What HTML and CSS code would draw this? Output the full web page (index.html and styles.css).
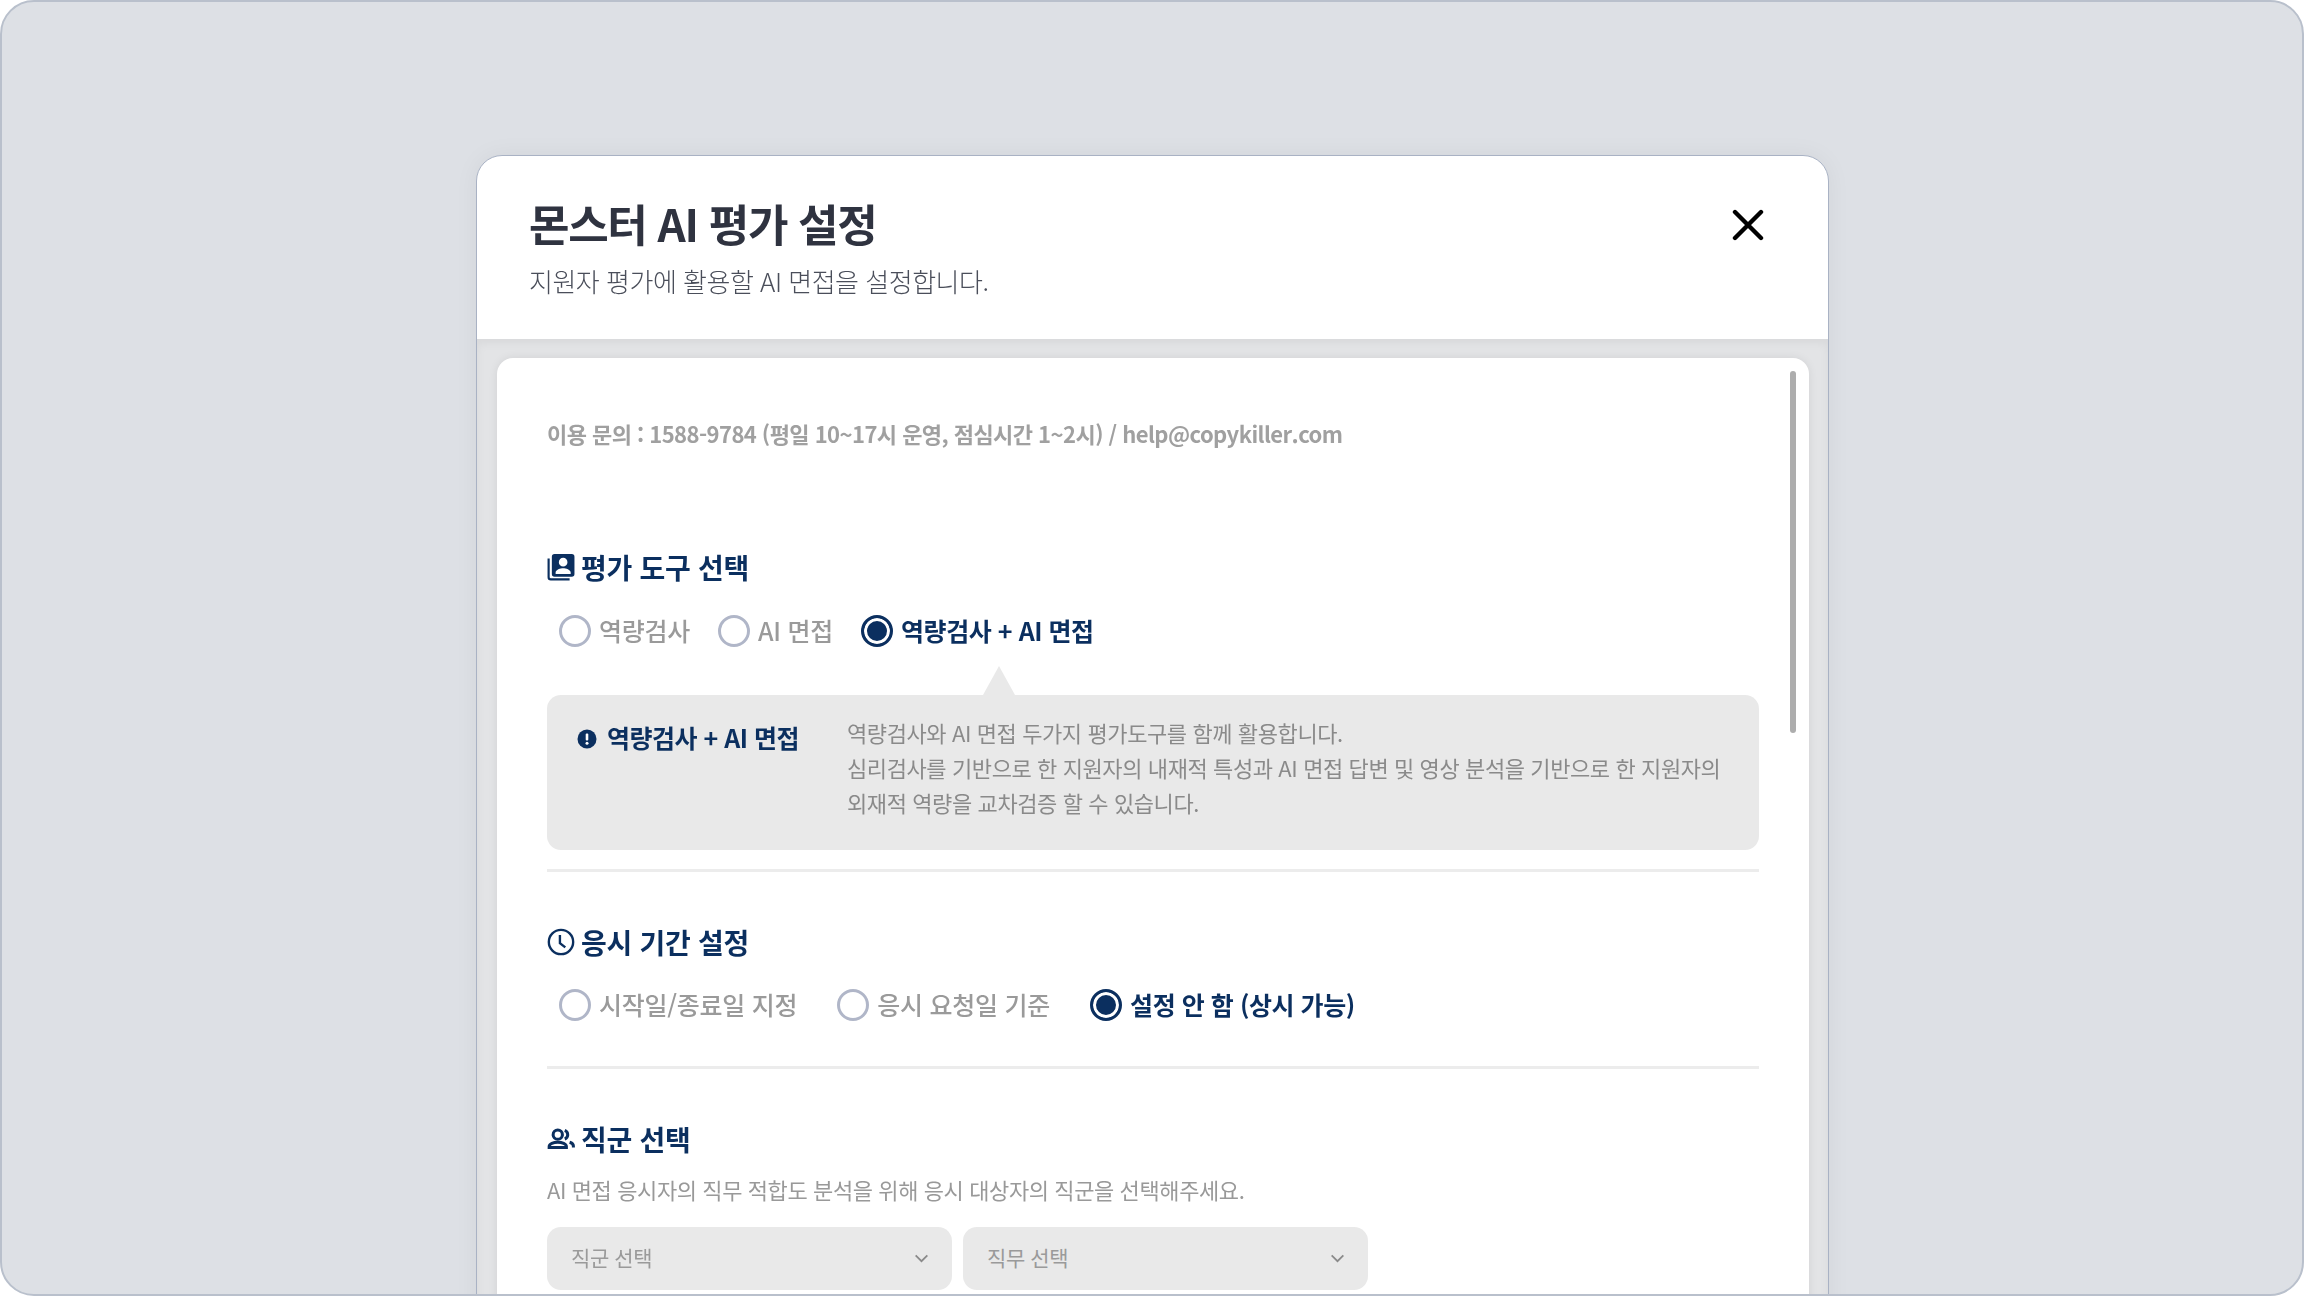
FILE: index.html
```html
<!DOCTYPE html>
<html lang="ko">
<head>
  <meta charset="UTF-8">
  <title>몬스터 AI 평가 설정</title>
  <link rel="stylesheet" href="styles.css">
</head>
<body>
  <div class="frame">
    <div class="modal">
      <div class="modal-head">
        <div>
          <h1>몬스터 AI 평가 설정</h1>
          <p class="modal-sub">지원자 평가에 활용할 AI 면접을 설정합니다.</p>
        </div>
        <button class="close-btn" aria-label="닫기">
          <svg width="32" height="32" viewBox="0 0 32 32"><path d="M3 3L29 29M29 3L3 29" fill="none" stroke="#000" stroke-width="4.400" stroke-linecap="round"/></svg>
        </button>
      </div>

      <div class="modal-body">
        <div class="card">
          <div class="scroll-thumb"></div>
          <p class="contact">이용 문의 : 1588-9784 (평일 10~17시 운영, 점심시간 1~2시) / help@copykiller.com</p>

          <section class="block first">
            <h2>
              <svg class="head-icon" width="28" height="28" viewBox="0 0 26 26">
                <path d="M1.500 5v17.500a2 2 0 0 0 2 2H21" fill="none" stroke="#0b2f5f" stroke-width="2"/>
                <path fill="#0b2f5f" fill-rule="evenodd" d="M7 1h16a2.500 2.500 0 0 1 2.500 2.500v16a2.500 2.500 0 0 1-2.500 2.500H7a2.500 2.500 0 0 1-2.500-2.500v-16A2.500 2.500 0 0 1 7 1zm8 3.500a4 4 0 1 0 0 8 4 4 0 0 0 0-8zM8 19.500h14v-1.300c0-2.600-4.500-4-7-4s-7 1.400-7 4z"/>
              </svg>
              평가 도구 선택
            </h2>
            <div class="radio-row">
              <label class="radio"><span class="dot"></span>역량검사</label>
              <label class="radio"><span class="dot"></span>AI 면접</label>
              <label class="radio on"><span class="dot"></span>역량검사 + AI 면접</label>
            </div>
            <div class="info-box">
              <div class="info-title">
                <svg class="info-icon" width="20" height="20" viewBox="0 0 20 20"><circle cx="10" cy="10" r="9.500" fill="#0b2f5f"/><rect x="8.700" y="4.500" width="2.600" height="7" rx="1" fill="#fff"/><circle cx="10" cy="14.300" r="1.500" fill="#fff"/></svg>
                역량검사 + AI 면접
              </div>
              <p class="info-text">역량검사와 AI 면접 두가지 평가도구를 함께 활용합니다.<br>심리검사를 기반으로 한 지원자의 내재적 특성과 AI 면접 답변 및 영상 분석을 기반으로 한 지원자의<br>외재적 역량을 교차검증 할 수 있습니다.</p>
            </div>
          </section>

          <section class="block period">
            <h2>
              <svg class="head-icon" width="28" height="28" viewBox="0 0 26 26">
                <circle cx="13" cy="13" r="11.300" fill="none" stroke="#0b2f5f" stroke-width="2.200"/>
                <path d="M12 6.500V14l5 4" fill="none" stroke="#0b2f5f" stroke-width="2.200"/>
              </svg>
              응시 기간 설정
            </h2>
            <div class="radio-row wide">
              <label class="radio"><span class="dot"></span>시작일/종료일 지정</label>
              <label class="radio"><span class="dot"></span>응시 요청일 기준</label>
              <label class="radio on"><span class="dot"></span>설정 안 함 (상시 가능)</label>
            </div>
          </section>

          <section class="block last">
            <h2>
              <svg class="head-icon" width="28" height="28" viewBox="0 0 26 26">
                <circle cx="10" cy="9" r="4.300" fill="none" stroke="#0b2f5f" stroke-width="2.800"/>
                <path d="M2 21v-1c0-2.500 4-4 8-4s8 1.500 8 4v1z" fill="none" stroke="#0b2f5f" stroke-width="2.800"/>
                <path d="M16.500 5a4.300 4.300 0 0 1 0 8M21 16c2 .6 3.500 2 3.500 3.500V21" fill="none" stroke="#0b2f5f" stroke-width="2.800"/>
              </svg>
              직군 선택
            </h2>
            <p class="desc">AI 면접 응시자의 직무 적합도 분석을 위해 응시 대상자의 직군을 선택해주세요.</p>
            <div class="select-row">
              <div class="select"><span class="select-label">직군 선택</span>
                <svg width="15" height="9" viewBox="0 0 16 10"><path d="M1.500 1.500L8 8l6.500-6.500" fill="none" stroke="#8a8a8a" stroke-width="2"/></svg>
              </div>
              <div class="select"><span class="select-label">직무 선택</span>
                <svg width="15" height="9" viewBox="0 0 16 10"><path d="M1.500 1.500L8 8l6.500-6.500" fill="none" stroke="#8a8a8a" stroke-width="2"/></svg>
              </div>
            </div>
          </section>
        </div>
      </div>
    </div>
  </div>
</body>
</html>
```

FILE: styles.css
```css
* {
  box-sizing: border-box;
}
html, body {
  margin: 0;
  height: 100%;
}
body {
  font-family: "Noto Sans CJK KR", "Noto Sans", sans-serif;
  background-color: #fff;
  overflow: hidden;
}
.frame {
  height: 1296px;
  padding-top: 153px;
  background-color: #dde0e5;
  border: 2px solid #b9c0cc;
  border-radius: 34px;
  overflow: hidden;
}
.modal {
  width: 1353px;
  height: 1400px;
  margin-left: 474px;
  background-color: #fff;
  border: 1.500px solid #a9b2c4;
  border-radius: 26px;
  overflow: hidden;
  box-shadow: 0 0 24px rgba(0, 0, 0, 0.05);
  filter: blur(0.35px);
}
.modal-head {
  display: flex;
  justify-content: space-between;
  height: 183px;
  padding: 39px 64px 0 52px;
}
.modal-head h1 {
  margin: 0;
  font-size: 44px;
  line-height: 56px;
  letter-spacing: -1.3px;
  font-weight: 700;
  color: #2f3340;
}
.modal-sub {
  margin: 12px 0 0;
  font-size: 26px;
  line-height: 36px;
  letter-spacing: -0.5px;
  font-weight: 300;
  color: #4a4e5a;
}
.close-btn {
  margin-top: 14px;
  padding: 0;
  width: 32px;
  height: 32px;
  border: none;
  background: none;
}
.modal-body {
  height: 1200px;
  padding: 19px 19px 0 20px;
  background-color: #e3e4e6;
  box-shadow: inset 0 4px 10px rgba(0, 0, 0, 0.05);
}
.card {
  position: relative;
  height: 1100px;
  padding: 55px 50px 0;
  background-color: #fff;
  border-radius: 16px;
  box-shadow: 0 0 10px rgba(0, 0, 0, 0.08);
}
.scroll-thumb {
  position: absolute;
  top: 13px;
  right: 13px;
  width: 6px;
  height: 362px;
  background-color: #adadad;
  border-radius: 3px;
}
.contact {
  margin: 0;
  font-size: 22px;
  line-height: 40px;
  letter-spacing: -0.55px;
  font-weight: 700;
  color: #a0a0a0;
}
.block {
  padding: 50px 0 0;
}
.block.first {
  padding-top: 94px;
  padding-bottom: 19px;
  border-bottom: 3px solid #ececec;
}
.block.period {
  padding-bottom: 44px;
  border-bottom: 3px solid #ececec;
}
h2 {
  display: flex;
  align-items: center;
  gap: 6px;
  margin: 0;
  font-size: 28px;
  line-height: 40px;
  letter-spacing: -0.3px;
  font-weight: 700;
  color: #0b2f5f;
}
.radio-row {
  display: flex;
  gap: 28px;
  margin-top: 25px;
  padding-left: 12px;
}
.radio-row.wide {
  gap: 40px;
  margin-top: 24px;
}
.radio {
  display: flex;
  align-items: center;
  gap: 8px;
  font-size: 25px;
  line-height: 36px;
  letter-spacing: -0.25px;
  font-weight: 500;
  color: #9a9a9a;
}
.radio .dot {
  width: 32px;
  height: 32px;
  margin-top: 2px;
  border: 3px solid #b0b6c8;
  border-radius: 50%;
  background-color: #fff;
}
.radio.on {
  color: #0b2f5f;
  font-weight: 700;
  letter-spacing: -0.45px;
}
.radio.on .dot {
  border-color: #0b2f5f;
  background-color: #0b2f5f;
  box-shadow: inset 0 0 0 3px #fff;
}
.info-box {
  position: relative;
  display: flex;
  margin-top: 47px;
  height: 155px;
  padding: 20px 30px;
  background-color: #e9e9e9;
  border-radius: 14px;
}
.info-box::before {
  content: "";
  position: absolute;
  top: -29px;
  left: 436px;
  border-left: 16px solid transparent;
  border-right: 16px solid transparent;
  border-bottom: 29px solid #e9e9e9;
}
.info-title {
  display: flex;
  align-items: center;
  align-self: flex-start;
  gap: 10px;
  width: 270px;
  margin-top: 4px;
  font-size: 25px;
  line-height: 36px;
  letter-spacing: -0.5px;
  font-weight: 700;
  color: #0b2f5f;
}
.info-icon {
  margin-top: 3px;
}
.info-text {
  margin: 0;
  font-size: 22px;
  line-height: 35px;
  letter-spacing: -0.4px;
  font-weight: 400;
  color: #8a8a8a;
}
.desc {
  margin: 14px 0 0;
  font-size: 22px;
  line-height: 32px;
  letter-spacing: -0.4px;
  color: #999;
}
.select-row {
  display: flex;
  gap: 11px;
  margin-top: 22px;
}
.select {
  display: flex;
  align-items: center;
  justify-content: space-between;
  width: 405px;
  height: 63px;
  padding: 0 23px 0 24px;
  background-color: #e9e9e9;
  border-radius: 14px;
  font-size: 21px;
  letter-spacing: -0.4px;
  color: #9a9a9a;
}
.select-label {
  margin-top: -4px;
}
```
